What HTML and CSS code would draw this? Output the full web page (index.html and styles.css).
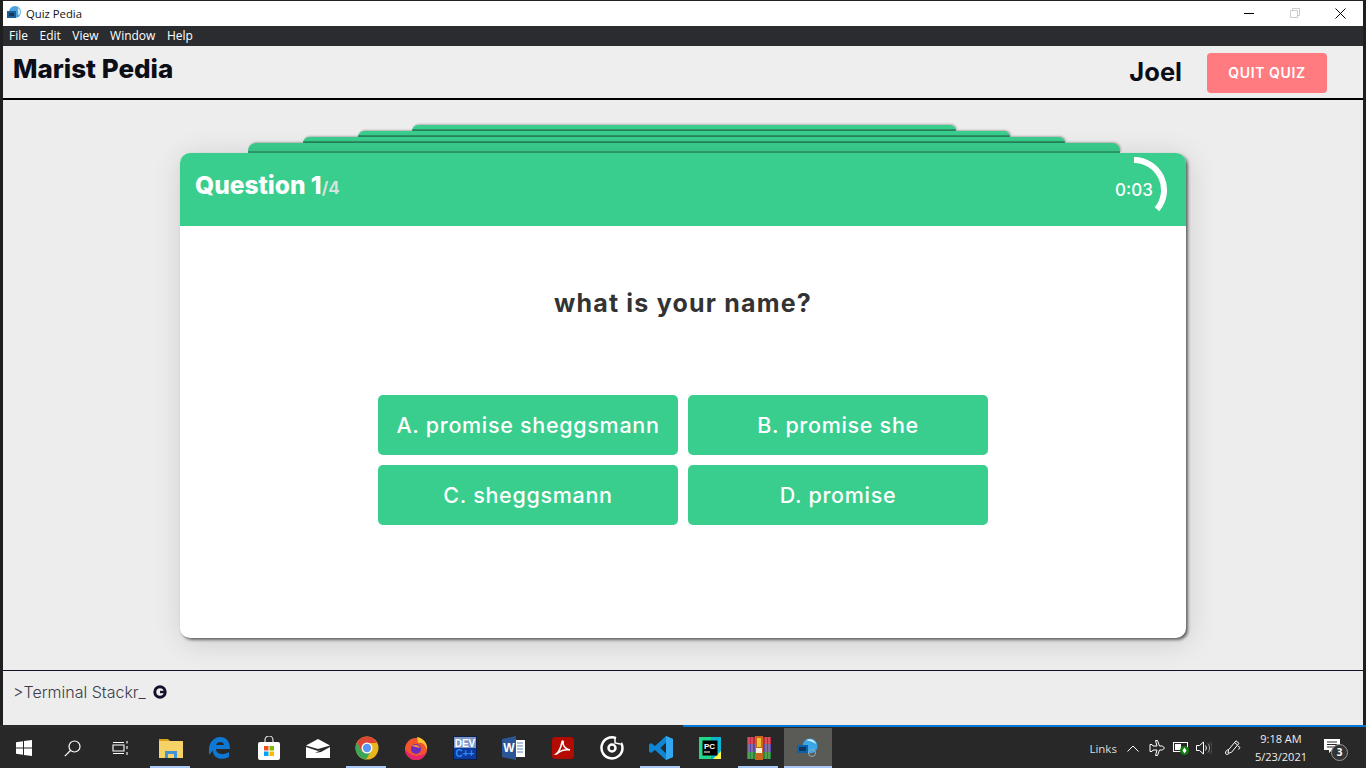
FILE: index.html
```html
<!DOCTYPE html>
<html lang="en">
<head>
  <meta charset="UTF-8">
  <title>Quiz Pedia</title>
  <link rel="stylesheet" href="styles.css">
</head>
<body>
  <div class="window">
    <div class="titlebar">
      <div class="title-left">
        <svg class="app-icon" width="16" height="16" viewBox="0 0 16 16"><circle cx="9" cy="7" r="6" fill="#4ba3dc"/><path d="M1 6h9v7H1z" fill="#1c5f96"/><path d="M3 8h5v3H3z" fill="#0f3a5e"/><path d="M12 3a5 5 0 0 1 2 6l-2 1z" fill="#d5eaf7"/></svg>
        <span>Quiz Pedia</span>
      </div>
      <div class="win-controls">
        <div class="win-btn"><svg width="10" height="10" viewBox="0 0 10 10"><path d="M0 5.500h10" stroke="#000"/></svg></div>
        <div class="win-btn"><svg width="10" height="10" viewBox="0 0 10 10" fill="none" stroke="#ccc"><path d="M.5 2.500h7v7h-7zM2.500 2.500v-2h7v7h-2"/></svg></div>
        <div class="win-btn"><svg width="11" height="11" viewBox="0 0 11 11"><path d="M.5.5l10 10M10.500.5l-10 10" stroke="#000"/></svg></div>
      </div>
    </div>
    <div class="menubar">
      <span>File</span><span>Edit</span><span>View</span><span>Window</span><span>Help</span>
    </div>
    <header class="app-header">
      <h1 class="brand">Marist Pedia</h1>
      <div class="user-box">
        <span class="user-name">Joel</span>
        <button class="quit-btn">QUIT QUIZ</button>
      </div>
    </header>
    <main class="main">
      <div class="deck">
        <div class="tab tab-4"></div>
        <div class="tab tab-3"></div>
        <div class="tab tab-2"></div>
        <div class="tab tab-1"></div>
        <section class="card">
          <div class="card-head">
            <div class="q-count">Question 1<span class="q-total">/4</span></div>
            <div class="timer">
              <svg class="timer-arc" width="68" height="68" viewBox="0 0 68 68"><path d="M34 4A30 30 0 0 1 57 53.300" fill="none" stroke="#fff" stroke-width="6"/></svg>
              <span>0:03</span>
            </div>
          </div>
          <div class="card-body">
            <h2 class="question">what is your name?</h2>
            <div class="answers">
              <button class="answer">A. promise sheggsmann</button>
              <button class="answer">B. promise she</button>
              <button class="answer">C. sheggsmann</button>
              <button class="answer">D. promise</button>
            </div>
          </div>
        </section>
      </div>
    </main>
    <footer class="app-footer">
      <span>&gt;Terminal Stackr_</span>
      <svg width="14" height="14" viewBox="0 0 14 14"><circle cx="7" cy="7" r="5.200" fill="none" stroke="#12122a" stroke-width="3"/><path d="M7 5.800h6v2.400H7z" fill="#12122a"/></svg>
    </footer>
  </div>

  <div class="strip"></div>

  <div class="taskbar">
    <div class="apps">
      <div class="slot slot-sm"><svg width="16" height="16" viewBox="0 0 16 16" fill="#fff"><path d="M0 2.300l7-1v6.200H0zM8 1.100L16 0v7.500H8zM0 8.500h7v6.200l-7-1zM8 8.500h8V16l-8-1.100z"/></svg></div>
      <div class="slot slot-sm"><svg width="17" height="17" viewBox="0 0 17 17" fill="none" stroke="#fff" stroke-width="1.200"><circle cx="10.500" cy="6.500" r="5.500"/><path d="M6.500 10.500L.8 16.200"/></svg></div>
      <div class="slot slot-sm"><svg width="17" height="16" viewBox="0 0 17 16" fill="none" stroke="#fff" stroke-width="1.100"><path d="M1 5h11v6H1zM1 2.500h11M1 13.500h11M15 1v2.500M15 6v3M15 12v3"/></svg></div>
      <div class="slot active first-app">
        <svg width="24" height="20" viewBox="0 0 24 20"><path d="M0 1h9l2 2h11v3H0z" fill="#d8a31d"/><path d="M0 3h24v17H0z" fill="#f7d367"/><path d="M6 20v-7h12v7h-3v-4H9v4z" fill="#3f93d6"/></svg>
      </div>
      <div class="slot">
        <svg width="21" height="22" viewBox="0 0 21 22"><path d="M0 11C1 4 6 0 11 0c6 0 10 4 10 12H7c0 5 7 7 13 3v5c-8 4-16 1-16-6-1 0-3 3-4 4zM7 8h8c0-4-7-4-8 0z" fill="#0f78d4"/></svg>
      </div>
      <div class="slot">
        <svg width="24" height="24" viewBox="0 0 24 24"><path d="M8 7V4a4 4 0 0 1 8 0v3" fill="none" stroke="#ddd" stroke-width="1.200"/><rect x="1" y="6" width="22" height="18" rx="2" fill="#fff"/><path d="M7 10h4.500v4.500H7z" fill="#f25022"/><path d="M12.500 10H17v4.500h-4.500z" fill="#7fba00"/><path d="M7 15.500h4.500V20H7z" fill="#00a4ef"/><path d="M12.500 15.500H17V20h-4.500z" fill="#ffb900"/></svg>
      </div>
      <div class="slot">
        <svg width="24" height="19" viewBox="0 0 24 19"><path d="M0 6.500L12 0l12 6.500L12 10z" fill="#fff"/><path d="M0 8l12 4 3-1-6 3 6-1 9-5v11H0z" fill="#fff"/></svg>
      </div>
      <div class="slot active">
        <svg width="24" height="24" viewBox="0 0 24 24"><circle cx="12" cy="12" r="11.500" fill="#e8b51d"/><path d="M12 .5A11.500 11.500 0 0 0 2 6.500L7 16l5-9h10A11.500 11.500 0 0 0 12 .5z" fill="#dc4537"/><path d="M2 6.500A11.500 11.500 0 0 0 11 23.500L16 15 7 16z" fill="#3ba558"/><circle cx="12" cy="12" r="5.500" fill="#fff"/><circle cx="12" cy="12" r="4.200" fill="#5b96f2"/></svg>
      </div>
      <div class="slot">
        <svg width="24" height="24" viewBox="0 0 24 24"><circle cx="12" cy="13" r="11" fill="#f2542d"/><path d="M1 13a11 11 0 0 0 22 0c0 5-5 6-10 7-5 0-9-3-12-7z" fill="#e3246e"/><path d="M13 1c6 1 11 6 10 13C21 7 17 6 14 7z" fill="#fdc52f"/><circle cx="12" cy="13" r="5" fill="#6c2cc2"/><path d="M8 10c3-2 7-1 8 2-3-1-5-1-8-2z" fill="#fb9a2c"/></svg>
      </div>
      <div class="slot">
        <svg width="24" height="24" viewBox="0 0 24 24"><rect width="24" height="24" fill="#0b1f4a"/><rect x="1" y="1" width="22" height="11" fill="#7c9ac9"/><rect x="1" y="12" width="22" height="11" fill="#0b3b9e"/><text x="12" y="10.500" class="dev-label" fill="#fff">DEV</text><text x="12" y="21" class="dev-label" fill="#2d8cf0">C++</text></svg>
      </div>
      <div class="slot">
        <svg width="24" height="24" viewBox="0 0 24 24"><path d="M8 4h15v17H8z" fill="#fff"/><path d="M15 7h6M15 10h6M15 13h6M15 16h6" stroke="#5c82bd"/><path d="M0 3l14-3v24L0 21z" fill="#2b5797"/><text x="6.800" y="16" class="word-label" fill="#fff">W</text></svg>
      </div>
      <div class="slot">
        <svg width="22" height="22" viewBox="0 0 22 22"><rect width="22" height="22" rx="3.500" fill="#b30b00"/><path d="M4 17c3-2 5-7 6-12 .4-2 2-1 1 2 1 3 3 5 7 6-4-.5-9 .5-12 3-1 1-2 1-2 1z" fill="none" stroke="#fff" stroke-width="1.500"/></svg>
      </div>
      <div class="slot">
        <svg width="24" height="24" viewBox="0 0 24 24" fill="none" stroke="#fff"><path d="M16 2.200A10.500 10.500 0 1 0 22.500 12c0-2-.5-3.500-1.500-5" stroke-width="2.500"/><circle cx="12" cy="12" r="3.500" stroke-width="2.500"/><path d="M15 1v6l5 1" stroke-width="1.500"/></svg>
      </div>
      <div class="slot active">
        <svg width="24" height="24" viewBox="0 0 24 24"><path d="M17 0l7 3v18l-7 3L6 14l-4 3-2-1.500v-7L2 7l4 3z" fill="#0e86d4"/><path d="M17 0l7 3v18l-7 3z" fill="#31a8f0"/><path d="M17 6.500l-5.500 5.500 5.500 5.500z" fill="#282828"/></svg>
      </div>
      <div class="slot">
        <svg width="22" height="22" viewBox="0 0 22 22"><path d="M0 0h15l7 7v15H0z" fill="#21d789"/><path d="M12 0h10v22H12z" fill="#0cb5d6"/><path d="M14 22l8-8v8z" fill="#fcf84a"/><rect x="3.500" y="3.500" width="15" height="15" fill="#000"/><text x="5" y="11.500" class="pc-label" fill="#fff">PC</text><rect x="5" y="14.500" width="6" height="1" fill="#fff"/></svg>
      </div>
      <div class="slot active">
        <svg width="24" height="24" viewBox="0 0 24 24"><rect y="1" width="24" height="7" fill="#c2264f"/><rect y="8" width="24" height="8" fill="#5b4bb0"/><rect y="16" width="24" height="7" fill="#1d8a46"/><path d="M8 0h8v24H8z" fill="#c9661c"/><path d="M10 2h4v9h-4z" fill="#f0c230"/><rect x="9" y="12" width="6" height="5" fill="#f5efe0"/><path d="M2 1v22M5 1v22M19 1v22M22 1v22" stroke="#e6c45a" stroke-opacity=".6"/></svg>
      </div>
      <div class="slot selected">
        <svg width="22" height="20" viewBox="0 0 22 20"><circle cx="13" cy="8" r="7.500" fill="#3ba6ea"/><path d="M9 2c4-2 9 0 10 4-4-3-7-3-10-4z" fill="#d6eefb"/><path d="M0 7h11v8H0z" fill="#0d62ab"/><path d="M2 9h7v4H2z" fill="#10355a"/><circle cx="15" cy="15" r="3.500" fill="none" stroke="#9aa" stroke-width="1"/></svg>
      </div>
    </div>
    <div class="tray">
      <span class="tray-links">Links</span>
      <svg class="tray-caret" width="12" height="7" viewBox="0 0 12 7" fill="none" stroke="#fff"><path d="M.5 6.500L6 1l5.500 5.500"/></svg>
      <svg class="tray-plane" width="16" height="16" viewBox="0 0 16 16" fill="none" stroke="#fff"><path d="M6.500.5h2l2 5.500h3l2 2-2 2h-3l-2 5.500h-2L8 10H4l-1 1.500H1V8V4.500h2L4 6h4z"/></svg>
      <svg class="tray-batt" width="16" height="14" viewBox="0 0 16 14"><rect x=".5" y="1.500" width="14" height="9" fill="none" stroke="#fff"/><rect x="2" y="3" width="6" height="6" fill="#fff"/><circle cx="11.500" cy="9.500" r="4.500" fill="#107c10"/><path d="M11.500 6.500l2 3-2 3-2-3z" fill="#fff"/></svg>
      <svg class="tray-vol" width="16" height="14" viewBox="0 0 16 14" fill="none" stroke="#fff"><path d="M.5 4.500h3l4-3.500v12l-4-3.500h-3z"/><path d="M9.500 4.500c1 1.500 1 3.500 0 5"/><path d="M12 2.500c2 2.500 2 6.500 0 9" stroke="#aaa"/><path d="M14.500 1c2 3.500 2 8.500 0 12" stroke="#555"/></svg>
      <svg class="tray-pen" width="16" height="16" viewBox="0 0 16 16" fill="none" stroke="#fff"><path d="M11 .8l3 2.500-7.500 9-3.500 1 .5-3.500zM9.500 2.500l3 2.500M13 6l2 1.500-1.500 2"/><path d="M3.500 9.500c-2 .5-3 2-3 3.500s2 2 3 1"/></svg>
      <div class="clock"><span>9:18 AM</span><span>5/23/2021</span></div>
      <div class="notify">
        <svg width="16" height="14" viewBox="0 0 16 14"><path d="M0 0h16v11H8l-3 3v-3H0z" fill="#fff"/><path d="M3 3h10M3 5.500h10M3 8h7" stroke="#282828"/></svg>
        <span class="notify-count">3</span>
      </div>
    </div>
  </div>
</body>
</html>
```

FILE: styles.css
```css
body {
  margin: 0;
  height: 768px;
  overflow: hidden;
  display: flex;
  flex-direction: column;
  background: #2a2a2a;
  font-family: "Inter", sans-serif;
}

button {
  border: none;
  cursor: pointer;
  font-family: inherit;
}

.window {
  height: 724px;
  flex: none;
  border-top: 1px solid #222;
  border-left: 3px solid #1f1f1f;
  border-right: 3px solid #1f1f1f;
  display: flex;
  flex-direction: column;
  background: #ededed;
}

/* Title bar */
.titlebar {
  height: 25px;
  flex: none;
  background: #fff;
  display: flex;
  justify-content: space-between;
  align-items: center;
  padding-bottom: 1px;
  box-sizing: border-box;
  font-family: "Open Sans", sans-serif;
  font-size: 11.300px;
  color: #111;
}

.title-left {
  display: flex;
  align-items: center;
  gap: 4px;
  padding-left: 3px;
}

.win-controls {
  display: flex;
}

.win-btn {
  width: 45.500px;
  height: 24px;
  display: flex;
  align-items: center;
  justify-content: center;
}

.menubar {
  height: 20px;
  flex: none;
  box-sizing: border-box;
  padding: 0 0 2px 6px;
  background: #2b2c2f;
  color: #fff;
  display: flex;
  align-items: center;
  gap: 11.500px;
  font-family: "Open Sans", sans-serif;
  font-size: 12px;
}

/* App header */
.app-header {
  height: 54px;
  flex: none;
  box-sizing: border-box;
  border-bottom: 2px solid #000;
  background: #eee;
  display: flex;
  justify-content: space-between;
  padding: 0 36px 0 10px;
}

.brand {
  margin: 6px 0 0;
  font-size: 26px;
  font-weight: 800;
  line-height: 34px;
  color: #0b0d17;
}

.user-box {
  display: flex;
  align-items: center;
  gap: 25px;
}

.user-name {
  font-size: 25.500px;
  font-weight: 700;
  color: #0b0d17;
  margin-bottom: 2px;
}

.quit-btn {
  width: 120px;
  height: 40px;
  margin-top: 2px;
  padding-bottom: 3px;
  background: #ff7b80;
  color: #fff;
  border-radius: 4px;
  font-size: 14px;
  font-weight: 600;
  letter-spacing: .6px;
}

/* Quiz card */
.main {
  height: 570px;
  flex: none;
  box-sizing: border-box;
  padding-top: 25px;
  display: flex;
  justify-content: center;
}

.deck {
  width: 1006px;
  display: flex;
  flex-direction: column;
  align-items: center;
}

.tab {
  height: 6px;
  flex: none;
  box-sizing: border-box;
  margin-left: 2px;
  background: #39ce8d;
  border-bottom: 2px solid #2f9e6e;
  border-radius: 8px 8px 0 0;
  box-shadow: 1px -1px 2px rgba(0, 0, 0, .25);
}

.tab-4 { width: 544px; }
.tab-3 { width: 652px; }
.tab-2 { width: 762px; }
.tab-1 { width: 872px; height: 10px; }

.card {
  width: 100%;
  height: 485px;
  flex: none;
  position: relative;
  background: #fff;
  border-radius: 10px;
  box-shadow: 2px 2px 3px #666, 2px 4px 30px rgba(0, 0, 0, .14);
  display: flex;
  flex-direction: column;
}

.card-head {
  height: 73px;
  flex: none;
  background: #39ce8d;
  border-radius: 10px 10px 0 0;
  color: #fff;
  display: flex;
  justify-content: space-between;
  align-items: center;
  padding: 0 18px 0 15px;
}

.q-count {
  font-size: 24.500px;
  font-weight: 800;
  margin-top: -9px;
}

.q-total {
  font-size: 17px;
  font-weight: 700;
  color: #d4e4dc;
}

.timer {
  width: 68px;
  height: 68px;
  position: relative;
  display: flex;
  align-items: center;
  justify-content: center;
  font-size: 17px;
  font-weight: 500;
  margin-top: 1px;
}

.timer-arc {
  position: absolute;
  top: 0;
  left: 0;
}

.card-body {
  flex: 1;
  display: flex;
  flex-direction: column;
  align-items: center;
}

.question {
  margin: 60px 0 0;
  font-size: 25px;
  line-height: 34px;
  font-weight: 700;
  letter-spacing: 1.200px;
  color: #333;
}

.answers {
  margin-top: 75px;
  display: grid;
  grid-template-columns: 300px 300px;
  grid-auto-rows: 60px;
  gap: 10px;
}

.answer {
  background: #39ce8d;
  color: #fff;
  border-radius: 5px;
  font-size: 21.500px;
  font-weight: 500;
  letter-spacing: .7px;
}

/* Footer */
.app-footer {
  flex: 1;
  border-top: 1px solid #12122a;
  display: flex;
  align-items: center;
  gap: 7px;
  padding: 0 0 12px 10px;
  font-size: 16px;
  color: #3b3b48;
  font-weight: 300;
}

/* Bits of the window behind */
.strip {
  height: 3px;
  flex: none;
  margin-left: 683px;
  box-sizing: border-box;
  border-top: 2px solid #0078d7;
}

/* Taskbar */
.taskbar {
  height: 40px;
  flex: none;
  display: flex;
  justify-content: space-between;
  background: #282828;
  color: #fff;
  font-family: "Open Sans", sans-serif;
}

.apps {
  display: flex;
}

.slot {
  width: 49px;
  height: 40px;
  box-sizing: border-box;
  flex: none;
  display: flex;
  align-items: center;
  justify-content: center;
  position: relative;
}

.slot-sm {
  width: 48px;
}

.first-app {
  margin-left: 2px;
}

.active::after {
  content: "";
  position: absolute;
  left: 4px;
  right: 5px;
  bottom: 0;
  height: 2px;
  background: #a9c8f5;
}

.selected {
  background: #5a5a57;
  margin-left: 1px;
  width: 48px;
}

.selected::after {
  content: "";
  position: absolute;
  left: 0;
  right: 0;
  bottom: 0;
  height: 2px;
  background: #a9c8f5;
}

.dev-label {
  font-family: "Liberation Sans", sans-serif;
  font-size: 10px;
  font-weight: 700;
  text-anchor: middle;
}

.word-label {
  font-family: "Liberation Sans", sans-serif;
  font-size: 12px;
  font-weight: 700;
  text-anchor: middle;
}

.pc-label {
  font-family: "Liberation Sans", sans-serif;
  font-size: 8px;
  font-weight: 700;
}

.tray {
  display: flex;
  align-items: center;
  padding-right: 18px;
}

.tray-links {
  font-size: 11.500px;
  color: #ddd;
  margin-right: 10px;
}

.tray-caret { margin-right: 10px; }
.tray-plane { margin-right: 8px; }
.tray-batt { margin-right: 7px; }
.tray-vol { margin-right: 13px; }
.tray-pen { margin-right: 14px; }

.clock {
  display: flex;
  flex-direction: column;
  align-items: center;
  font-size: 11px;
  line-height: 18px;
  color: #eee;
  margin-right: 17px;
}

.notify {
  width: 24px;
  height: 24px;
  position: relative;
}

.notify-count {
  position: absolute;
  top: 8px;
  left: 7px;
  width: 15px;
  height: 15px;
  border-radius: 50%;
  border: 1px solid #999;
  background: #333;
  font-size: 10px;
  font-weight: 700;
  line-height: 15px;
  text-align: center;
}
```
